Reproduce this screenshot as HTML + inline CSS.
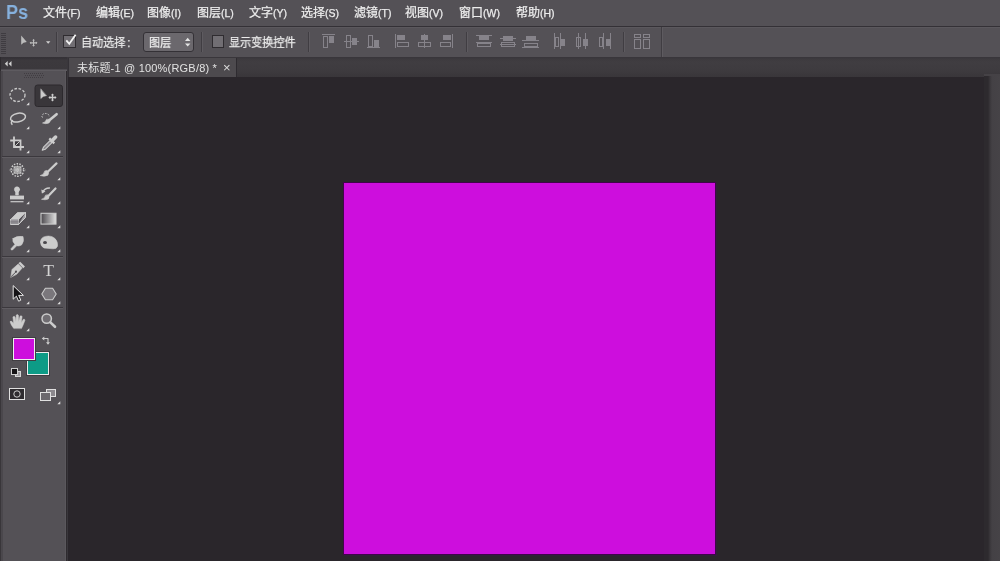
<!DOCTYPE html>
<html lang="zh-CN">
<head>
<meta charset="utf-8">
<title>未标题-1 @ 100%(RGB/8)</title>
<style>
*{box-sizing:border-box;margin:0;padding:0}
html,body{width:1000px;height:561px;overflow:hidden;background:#2a262b}
body{position:relative;font-family:"Liberation Sans","Noto Sans CJK SC",sans-serif;color:#e9e9e9;font-size:12px}
.abs{position:absolute}
#menubar{position:absolute;left:0;top:0;width:1000px;height:26px;background:#545156}
#menuline{position:absolute;left:0;top:26px;width:1000px;height:1px;background:#343136}
#optbar{position:absolute;left:0;top:27px;width:1000px;height:30px;background:#545156;border-top:1px solid #5b585d}
#tabbar{position:absolute;left:0;top:57px;width:1000px;height:20px;background:linear-gradient(#38353a 0,#3d3a3e 2px,#403d41 5px,#3e3b3f 13px,#39363a 20px)}
#tab{position:absolute;left:68px;top:58px;width:169px;height:19px;background:#4d4a4e;border-left:1px solid #343136;border-right:1px solid #2e2b30}
.m{-webkit-text-stroke:.25px #ececec;will-change:transform;position:absolute;top:5px;white-space:nowrap;font-size:12px;line-height:16px;color:#ececec}
.m i{font-style:normal;font-size:10.5px}
.o{-webkit-text-stroke:.25px #ececec;will-change:transform;position:absolute;white-space:nowrap;font-size:12px;line-height:16px;color:#ececec}
#ps{will-change:transform;position:absolute;left:6px;top:0px;font-weight:bold;font-size:21px;line-height:24px;color:#86b1de;transform-origin:0 0;transform:scaleX(.86)}
.sx{transform-origin:0 50%;transform:scaleX(.925)}
.vsep{position:absolute;top:31px;width:2px;height:23px;border-left:1px solid #3f3c41;border-right:1px solid #5e5b60}
#tools{position:absolute;left:0;top:57px;width:68px;height:504px;background:#545156;border-right:1px solid #3a373c;border-left:1px solid #39363a;box-shadow:inset -1px 0 0 #2e2b2f, inset -2px 0 0 #5b585d, inset 2px 0 0 #4a474c}
#toolhead{position:absolute;left:0;top:57px;width:67px;height:14px;background:linear-gradient(#343136 0,#363338 2px,#3c393d 3px,#3b383c 12px,#4e4b50 12px,#4e4b50 13px,#5e5b60 13px,#5e5b60 14px);border-left:1px solid #2e2b2f}
#vscroll{position:absolute;left:984px;top:74px;width:16px;height:487px;border-top:2px solid #454246;background:linear-gradient(90deg,#2d2a2e 0,#2d2a2e 4px,#3a373b 6px,#444145 8px,#464347 16px)}
#doc{position:absolute;left:344px;top:183px;width:371px;height:371px;background:#cd0edd;box-shadow:0 0 0 1px #40054a,1px 1px 0 1px #30203a}
</style>
</head>
<body>
<div id="menubar"></div>
<div id="menuline"></div>
<div id="optbar"></div>
<div id="tabbar"></div>
<div id="tab"></div>
<div id="vscroll"></div>
<div id="doc"></div>


<!-- ===== options bar ===== -->
<svg id="opt" class="abs" style="left:0;top:0;pointer-events:none" width="1000" height="561" viewBox="0 0 1000 561">
<!-- grip -->
<g stroke="#3f3c41" stroke-width="5" stroke-dasharray="1 1"><path d="M3.500 33V55"/></g>
<!-- move tool preset -->
<g fill="#bcbcbc" stroke="none">
<path d="M21.200 35.600V44.800L23.500 42.700L26.800 42Z"/>
<path d="M33 39.800h1.100v6h-1.100zM30.500 42.300h6v1.100h-6z"/>
<path d="M33.550 38.900l1.400 1.600h-2.800zM33.550 46.700l1.400-1.600h-2.800zM29.600 42.850l1.600-1.400v2.800zM37.500 42.850l-1.600-1.400v2.800z"/>
<path d="M46 41.200h4.400l-2.200 2.500z" fill="#d0d0d0"/>
</g>
<!-- separators -->
<g stroke="#403d42" stroke-width="1"><path d="M56.500 32V52M201.500 32V52M308.500 32V52M466.500 32V52M623.500 32V52M661.500 27V57"/></g>
<g stroke="#5e5b60" stroke-width="1"><path d="M57.500 32V52M202.500 32V52M309.500 32V52M467.500 32V52M624.500 32V52M662.500 27V57"/></g>
<!-- checkbox 1 (checked) -->
<rect x="63.500" y="35.500" width="12" height="12" fill="#716e73" stroke="#2f2c30" stroke-width="1"/>
<path d="M66.300 40.300L69.300 43.800L75.600 34.800" fill="none" stroke="#f2f2f2" stroke-width="1.800"/>
<!-- dropdown -->
<rect x="143.500" y="32.500" width="50" height="19" rx="2.500" fill="#6b686d" stroke="#343136" stroke-width="1"/>
<path d="M185 41h5.400l-2.700-3.200zM185 43.400h5.400l-2.700 3.200z" fill="#e4e4e4"/>
<!-- checkbox 2 -->
<rect x="212.500" y="35.500" width="11" height="12" fill="#716e73" stroke="#2f2c30" stroke-width="1"/>

<!-- align icons (disabled) -->
<g fill="none" stroke="#86838a" stroke-width="1" shape-rendering="crispEdges">
<!-- align top -->
<path d="M322 34.500H335"/><rect x="323.500" y="36.500" width="4" height="11"/><rect x="329.500" y="36.500" width="4" height="6" fill="#86838a"/>
<!-- align vcenter -->
<path d="M344 41.500H359"/><rect x="346.500" y="35.500" width="4" height="12"/><rect x="352.500" y="38.500" width="4" height="6" fill="#86838a"/>
<!-- align bottom -->
<path d="M367 47.500H380"/><rect x="368.500" y="35.500" width="4" height="11"/><rect x="374.500" y="40.500" width="4" height="6" fill="#86838a"/>
<!-- align left -->
<path d="M395.500 34V48"/><rect x="397.500" y="35.500" width="7" height="4" fill="#86838a"/><rect x="397.500" y="42.500" width="11" height="4"/>
<!-- align hcenter -->
<path d="M424.500 34V48"/><rect x="421.500" y="35.500" width="6" height="4" fill="#86838a"/><rect x="418.500" y="42.500" width="12" height="4"/>
<!-- align right -->
<path d="M452.500 34V48"/><rect x="443.500" y="35.500" width="7" height="4" fill="#86838a"/><rect x="440.500" y="42.500" width="10" height="4"/>
<!-- distribute top / vcenter / bottom -->
<path d="M476 35.500H492M476 42.500H492"/><rect x="479.500" y="36.500" width="9" height="3" fill="#86838a"/><rect x="477.500" y="43.500" width="13" height="3"/>
<path d="M500 38.500H516M500 44.500H516"/><rect x="503.500" y="36.500" width="9" height="4" fill="#86838a"/><rect x="501.500" y="42.500" width="13" height="4"/>
<path d="M522 40.500H539M522 47.500H539"/><rect x="526.500" y="36.500" width="9" height="3" fill="#86838a"/><rect x="524.500" y="43.500" width="13" height="3"/>
<!-- distribute left / hcenter / right -->
<path d="M554.500 33V49M560.500 33V49"/><rect x="555.500" y="37.500" width="3" height="9"/><rect x="561.500" y="39.500" width="3" height="6" fill="#86838a"/>
<path d="M578.500 33V49M585.500 33V49"/><rect x="576.500" y="37.500" width="4" height="9"/><rect x="583.500" y="39.500" width="4" height="6" fill="#86838a"/>
<path d="M603.500 33V49M610.500 33V49"/><rect x="599.500" y="37.500" width="3" height="9"/><rect x="606.500" y="39.500" width="3" height="6" fill="#86838a"/>
<!-- auto-align -->
<rect x="634.500" y="34.500" width="6" height="3"/><rect x="643.500" y="34.500" width="6" height="3"/>
<rect x="634.500" y="39.500" width="6" height="9"/><rect x="643.500" y="39.500" width="6" height="9"/>
</g>
</svg>
<div id="ps">Ps</div>
<span class="m" style="left:43px">文件<i>(F)</i></span>
<span class="m" style="left:96px">编辑<i>(E)</i></span>
<span class="m" style="left:147px">图像<i>(I)</i></span>
<span class="m" style="left:197px">图层<i>(L)</i></span>
<span class="m" style="left:249px">文字<i>(Y)</i></span>
<span class="m" style="left:301px">选择<i>(S)</i></span>
<span class="m" style="left:354px">滤镜<i>(T)</i></span>
<span class="m" style="left:405px">视图<i>(V)</i></span>
<span class="m" style="left:459px">窗口<i>(W)</i></span>
<span class="m" style="left:516px">帮助<i>(H)</i></span>

<span class="o sx" style="left:80.500px;top:35px">自动选择<span style="margin-left:2px">:</span></span>
<span class="o sx" style="left:149px;top:35px">图层</span>
<span class="o sx" style="left:229px;top:35px">显示变换控件</span>
<span class="o" style="left:76.500px;top:60px;font-size:11px;letter-spacing:.2px;-webkit-text-stroke:0;color:#e2e2e2">未标题-1 @ 100%(RGB/8) *</span>
<span class="o" style="left:223px;top:60px;font-size:13px;-webkit-text-stroke:0;color:#dcdcdc">×</span>

<div id="tools"></div>
<div id="toolhead"></div>

<svg id="ico" class="abs" style="left:0;top:0;pointer-events:none" width="1000" height="561" viewBox="0 0 1000 561">
<defs>
<path id="tri" d="M3 0V3H0Z" fill="#dcdcdc"/>
<linearGradient id="gr" x1="0" x2="1" y1="0" y2="0"><stop offset="0" stop-color="#4a474c"/><stop offset="1" stop-color="#e0e0e0"/></linearGradient>
</defs>

<!-- ===== toolbar chrome ===== -->
<g fill="#d0d0d0"><path d="M4.800 63.800l2.900-2.800v5.600zM8.600 63.800l2.900-2.800v5.600z"/></g>
<g stroke="#3c393e" stroke-width="1" stroke-dasharray="1 1"><path d="M24 73.500H44M25 75.500H44M24 77.500H44" opacity=".8"/></g>
<g stroke="#3b383d" stroke-width="1"><path d="M2 156.500H63M2 256.500H63M2 307.500H63"/></g>
<g stroke="#5f5c61" stroke-width="1"><path d="M2 157.500H63M2 257.500H63M2 308.500H63"/></g>

<!-- selected tool box -->
<rect x="35" y="85" width="27.5" height="21.5" rx="2.5" fill="#39363a" stroke="#2c292d" stroke-width="1"/>

<!-- corner triangles -->
<g>
<use href="#tri" x="26.3" y="102.3"/>
<use href="#tri" x="26.3" y="126.3"/><use href="#tri" x="57.3" y="126.3"/>
<use href="#tri" x="26.3" y="150.3"/><use href="#tri" x="57.3" y="150.3"/>
<use href="#tri" x="26.3" y="177.3"/><use href="#tri" x="57.3" y="177.3"/>
<use href="#tri" x="26.3" y="201.3"/><use href="#tri" x="57.3" y="201.3"/>
<use href="#tri" x="26.3" y="225.3"/><use href="#tri" x="57.3" y="225.3"/>
<use href="#tri" x="26.3" y="249.3"/><use href="#tri" x="57.3" y="249.3"/>
<use href="#tri" x="26.3" y="277.3"/><use href="#tri" x="57.3" y="277.3"/>
<use href="#tri" x="26.3" y="301.3"/><use href="#tri" x="57.3" y="301.3"/>
<use href="#tri" x="26.3" y="328.3"/>
<use href="#tri" x="57.3" y="401.3"/>
</g>

<!-- ===== tool icons ===== -->
<g fill="none" stroke="#cccccc" stroke-width="1.3" stroke-linecap="round" stroke-linejoin="round">
<!-- elliptical marquee -->
<ellipse cx="17.5" cy="95" rx="7.5" ry="6.5" stroke-dasharray="2.6 1.6" stroke-linecap="butt"/>
<!-- move -->
<path d="M40.800 89.200V98.600L43.200 96.400L46.200 95.700Z" fill="#cccccc" stroke-width=".5"/>
<path d="M52.500 94.500V100.500M49.500 97.500H55.500" stroke-width="1.300" stroke-linecap="butt"/>
<path d="M52.500 93.400l1.600 1.800h-3.200zM52.500 101.600l1.600-1.800h-3.200zM48.400 97.500l1.800-1.600v3.200zM56.600 97.500l-1.800-1.600v3.200z" fill="#cccccc" stroke="none"/>
<!-- lasso -->
<ellipse cx="18" cy="117.6" rx="7.6" ry="4.3" transform="rotate(-12 18 117.6)" stroke-width="1.5"/>
<path d="M12.5 120.5q-2 1.5-.5 4" stroke-width="1.4"/>
<!-- quick selection -->
<path d="M56.6 114.2L49 120.6" stroke-width="2.6"/>
<path d="M49.5 119.6q1.6 2.3-1 3.6q-3 1-6-.2q3.200-.5 4-3.400z" fill="#cccccc" stroke-width=".6"/>
<path d="M42.500 117.500a3.600 2.600 0 1 1 6.500-.8" stroke-width="1" stroke-dasharray="1.6 1.2" stroke-linecap="butt"/>
<!-- crop -->
<path d="M14 136.500V147H24M10.200 140.500H20.500V150.500" stroke-width="1.800" stroke-linecap="butt" stroke-linejoin="miter"/>
<rect x="15" y="141.500" width="4.500" height="4.500" fill="#3c393e" stroke="none"/><path d="M15.500 145.500L19.500 141.500" stroke-width="1"/>
<!-- eyedropper -->
<path d="M42.200 150.200L43.500 147.200L50 140.600L52 142.600L45.400 149.200Z" stroke-width="1.100" fill="#8d8a8f"/>
<path d="M49.300 138.400L54.300 143.400" stroke-width="2.200" stroke-linecap="butt"/>
<path d="M52.400 140.300L55.600 137.100" stroke-width="3.600"/>
<!-- spot healing -->
<circle cx="17.500" cy="170" r="6.300" stroke-width="1.400" stroke-dasharray="1.500 1.300" stroke-linecap="butt"/>
<rect x="13.500" y="166" width="8" height="8" fill="#bdbdbd" stroke="none" opacity=".75"/>
<path d="M9.500 170H25.500M17.500 163V177M12 165.500L23 174.500M23 165.500L12 174.500" stroke-width="1" stroke-dasharray="1.400 1.200" stroke-linecap="butt" opacity=".8"/>
<!-- brush -->
<path d="M56.500 163.400L48.300 171.300" stroke-width="2.200"/>
<path d="M47.300 170.600q2.500 2 .6 4.600q-3.300 1.800-7.700.4q3.800-.8 4.500-4.400z" fill="#cccccc" stroke-width=".6"/>
<!-- stamp -->
<circle cx="17" cy="189.400" r="2.600" fill="#cccccc" stroke-width=".6"/>
<path d="M15.600 191V195H18.400V191Z" fill="#cccccc" stroke-width=".6"/>
<rect x="10" y="195.600" width="14" height="3.800" fill="#cccccc" stroke="none"/>
<path d="M10.500 201.700H23.500" stroke-width="1.200" stroke-linecap="butt"/>
<!-- history brush -->
<path d="M55.500 188.500L48.800 195.600" stroke-width="2.200"/>
<path d="M48 195q2 1.900.3 4q-3 1.400-6.800.3q3.400-.7 4-3.800z" fill="#cccccc" stroke-width=".6"/>
<path d="M42.500 192.500q2-4.500 7-4.500" stroke-width="1.300"/>
<path d="M41.300 189.400l.6 4.200l3.600-2.200z" fill="#cccccc" stroke="none"/>
<!-- eraser -->
<path d="M10.500 219.500L17.500 212.500H25.500L18.500 219.500Z" fill="#cccccc" stroke-width=".8"/>
<path d="M10.500 219.500V224.500H18.500V219.500M18.500 224.500L25.500 217.500V212.500" stroke-width="1" fill="#a5a3a7"/>
<path d="M10.500 221.200H18.500M10.500 222.900H18.500" stroke-width=".7" stroke="#66636a"/>
<!-- gradient -->
<rect x="41" y="213.300" width="15" height="10.800" fill="url(#gr)" stroke-width="1.100" stroke-linejoin="miter"/>
<!-- smudge -->
<path d="M13 238.500q4-3 10-2q1.500 5-1.500 8.500q-2.500 1.500-4.800.8l-4.200 4.200q-1.800.5-1.500-1.300l4-4.400q-3-2.500-2-5.800z" fill="#cccccc" stroke-width=".6"/>
<!-- sponge -->
<path d="M40.500 242q0-4.500 5-5.600q6-1.200 9.500 2.200q3 3 2.500 7.600q-1 3-4.500 2.600l-9-.8q-3.500-1.500-3.500-6z" fill="#cccccc" stroke-width=".6"/>
<ellipse cx="45" cy="242.500" rx="2" ry="1.600" fill="#4a474c" stroke="none"/>
<!-- pen -->
<path d="M10.800 277l1.200-7.500l6.200-5.500l4 4l-5.500 6.200z" fill="#cccccc" stroke-width=".6"/>
<path d="M19.300 262.500l4.800 4.800" stroke-width="2.400" stroke-linecap="butt"/>
<path d="M11.300 276.500l4.200-4.200" stroke="#535055" stroke-width="1"/>
<circle cx="16" cy="271.700" r="1.100" fill="#535055" stroke="none"/>
<!-- path selection arrow -->
<path d="M13.200 286V299.200L16.400 296.200L18.600 301.200L20.800 300.200L18.700 295.400H23Z" fill="#151316" stroke="#e6e6e6" stroke-width="1"/>
<!-- polygon -->
<path d="M41.800 294l3.600-5.700h7.200l3.600 5.700l-3.600 5.700h-7.200z" fill="#7a777c" stroke-width="1.100"/>
<!-- hand -->
<path d="M13.600 328.300q-2.600-3.200-3.600-6.600q.9-1.300 2.400.2l1.200 1.600l-.7-6.600q1.400-1.400 2.200.2l.9 4.300l.2-6.300q1.600-1.300 2.200.2l.3 6.100l1.400-5.300q1.600-.9 2 .6l-.8 6l2.100-3.400q1.600-.5 1.500 1.100q-1.600 4.500-3.300 7.900z" fill="#cccccc" stroke-width=".5"/>
<!-- zoom -->
<circle cx="46.700" cy="318.600" r="4.700" stroke-width="1.500" fill="#706d72"/>
<path d="M50.400 322.400L55 326.800" stroke-width="2.600"/>
<!-- switch colors -->
<path d="M43.500 338.500h4.500v4.500" stroke-width="1.100"/>
<path d="M41.800 338.500l2.500-2v4zM48 344.800l-2-2.500h4z" fill="#cccccc" stroke="none"/>
</g>

<!-- colour swatches -->
<rect x="27.500" y="352.500" width="21" height="22" fill="#0d9b86" stroke="#ededed" stroke-width="1"/>
<rect x="26.500" y="351.500" width="23" height="24" fill="none" stroke="#403d42" stroke-width="1"/>
<rect x="13.500" y="338.500" width="21" height="21" fill="#cd0edd" stroke="#ededed" stroke-width="1"/>
<rect x="12.500" y="337.500" width="23" height="23" fill="none" stroke="#403d42" stroke-width="1"/>
<!-- default colours -->
<rect x="15.500" y="371.500" width="5" height="5" fill="#a09da2" stroke="#d6d6d6" stroke-width="1"/>
<rect x="11.500" y="368.500" width="6" height="6" fill="#151316" stroke="#d0d0d0" stroke-width="1"/>
<!-- quick mask -->
<rect x="9.500" y="388.500" width="15" height="11" fill="#2f2c30" stroke="#e0e0e0" stroke-width="1"/>
<circle cx="17" cy="394" r="3.200" fill="none" stroke="#cfcfcf" stroke-width="1"/>
<!-- screen mode -->
<rect x="46.500" y="389.500" width="9" height="7" fill="#8b888d" stroke="#e0e0e0" stroke-width="1"/>
<rect x="40.500" y="392.500" width="10" height="8" fill="#6b686d" stroke="#e0e0e0" stroke-width="1"/>
</svg>
<span class="abs" style="will-change:transform;left:42px;top:260px;width:13px;text-align:center;font-family:'Liberation Serif',serif;font-size:17.500px;line-height:20px;color:#d4d4d4">T</span>
</body>
</html>
